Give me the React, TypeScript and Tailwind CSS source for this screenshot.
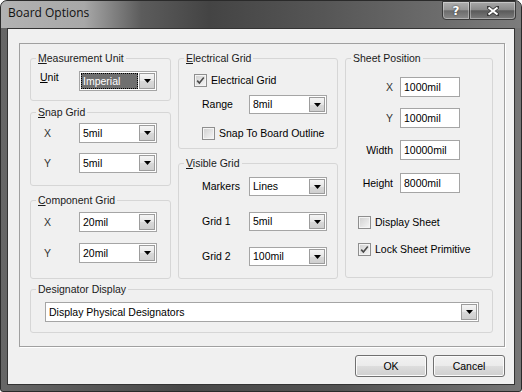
import React from "react";

const Arrow = () => (
  <svg width="7" height="4" viewBox="0 0 7 4">
    <path d="M0 0H7L3.5 4Z" fill="#000" />
  </svg>
);

function Combo({
  value,
  className,
  selected,
}: {
  value: string;
  className: string;
  selected?: boolean;
}) {
  return (
    <div
      className={
        "flex items-stretch bg-white border border-[#a5a5a5] p-[1px] shrink-0 " +
        className
      }
    >
      <div className="flex-1 flex items-center min-w-0 pr-[1px]">
        {selected ? (
          <span className="flex-1 h-full flex items-center bg-[#6f6f6f] text-white outline outline-1 outline-dotted outline-black -outline-offset-1 pl-[2px]">
            {value}
          </span>
        ) : (
          <span className="pl-[2px] whitespace-nowrap">{value}</span>
        )}
      </div>
      <div className="w-[16px] flex items-center justify-center border border-[#9c9c9c] bg-[linear-gradient(#f5f5f5,#e6e6e6_50%,#d9d9d9_51%,#cfcfcf)]">
        <Arrow />
      </div>
    </div>
  );
}

function Check({ checked }: { checked?: boolean }) {
  return (
    <div className="w-[13px] h-[13px] border border-[#8e8e8e] bg-[#f4f4f4] p-[1px] shrink-0">
      <div className="w-full h-full flex items-center justify-center bg-[linear-gradient(135deg,#d2d2d2,#f3f3f3)]">
        {checked && (
          <svg width="9" height="9" viewBox="0 0 9 9">
            <path
              d="M1.2 4.6L3.4 7L7.8 1.6"
              stroke="#4a4a4a"
              strokeWidth="1.6"
              fill="none"
            />
          </svg>
        )}
      </div>
    </div>
  );
}

function Field({ value }: { value: string }) {
  return (
    <div className="w-[60px] h-[20px] bg-white border border-[#a5a5a5] flex items-center pl-[3px] whitespace-nowrap">
      {value}
    </div>
  );
}

function Legend({ children }: { children: React.ReactNode }) {
  return (
    <legend className="ml-[5px] px-[2px] leading-[13px] text-[#1a1a1a] whitespace-nowrap">
      {children}
    </legend>
  );
}

const gb = "border border-[#d6d6d6] rounded-[3px] m-0 p-0 min-w-0";

function CaptionButtons() {
  return (
    <div className="flex mr-[5px]">
      <div className="w-[28px] h-[19px] border border-[#3a3a3a] rounded-bl-[4px] bg-[linear-gradient(#b0b0b0,#979797_45%,#6c6c6c_52%,#8a8a8a)] shadow-[inset_0_0_0_1px_rgba(255,255,255,0.35)] flex items-center justify-center">
        <span className="font-['DejaVu_Sans',sans-serif] font-bold text-[12px] leading-[12px] text-white [text-shadow:0_0_2px_#222]">
          ?
        </span>
      </div>
      <div className="w-[46px] h-[19px] border border-l-0 border-[#3a3a3a] rounded-br-[4px] bg-[linear-gradient(#a8a8a8,#8a8a8a_45%,#5a5a5a_52%,#7c7c7c)] shadow-[inset_0_0_0_1px_rgba(255,255,255,0.35)] flex items-center justify-center">
        <svg width="12" height="10" viewBox="0 0 12 10">
          <path
            d="M1 1L11 9M11 1L1 9"
            stroke="#3a3a3a"
            strokeWidth="3.6"
            strokeLinecap="square"
          />
          <path
            d="M1.5 1.5L10.5 8.5M10.5 1.5L1.5 8.5"
            stroke="#fff"
            strokeWidth="2"
          />
        </svg>
      </div>
    </div>
  );
}

function Btn({ label }: { label: string }) {
  return (
    <div className="w-[72px] h-[22px] rounded-[3px] border border-[#707070] bg-[linear-gradient(#f2f2f2,#ebebeb_50%,#dddddd_51%,#cfcfcf)] shadow-[inset_0_0_0_1px_#fbfbfb] flex items-center justify-center">
      {label}
    </div>
  );
}

export default function App() {
  return (
    <div className="w-[522px] h-[392px] bg-white font-['Liberation_Sans',Arial,sans-serif] text-[10.5px] leading-[13px] text-black">
      <div className="w-full h-full rounded-t-[7px] rounded-b-[3px] flex flex-col overflow-hidden border border-[#2a2a2a] bg-[linear-gradient(90deg,#666,#484848_35%,#525252_65%,#767676)]">
        {/* title bar */}
        <div className="h-[27px] flex items-start justify-between bg-[linear-gradient(90deg,#b2b2b2,#a8a8a8_16%,#5c5c5c_27%,#444_40%,#565656_62%,#6c6c6c_84%,#7c7c7c)]">
          <span className="mt-[4px] ml-[7px] font-['Open_Sans',sans-serif] text-[12px] leading-[16px] text-[#111]">
            Board Options
          </span>
          <CaptionButtons />
        </div>

        {/* client */}
        <div className="flex-1 mx-[6px] mb-[6px] border border-[#333] bg-[#f0f0f0] flex flex-col pl-[11px] pt-[14px]">
          {/* panel */}
          <div className="w-[486px] h-[304px] border border-[#a0a0a0] shadow-[1px_1px_0_#fff] pt-[8px] pl-[10px] pr-[11px] flex flex-col">
            <div className="flex gap-[7px]">
              {/* left column */}
              <div className="w-[141px] flex flex-col">
                <fieldset className={gb + " h-[49px]"}>
                  <Legend>
                    <u>M</u>easurement Unit
                  </Legend>
                  <div className="flex items-start mt-[6px]">
                    <span className="ml-[9px] w-[39px]">
                      <u>U</u>nit
                    </span>
                    <Combo value="Imperial" selected className="w-[78px] h-[20px]" />
                  </div>
                </fieldset>
                <fieldset className={gb + " h-[80px] mt-[5px]"}>
                  <Legend>
                    <u>S</u>nap Grid
                  </Legend>
                  <div className="flex items-center mt-[4px]">
                    <span className="ml-[13px] w-[35px] text-[#333]">X</span>
                    <Combo value="5mil" className="w-[78px] h-[20px]" />
                  </div>
                  <div className="flex items-center mt-[10px]">
                    <span className="ml-[13px] w-[35px] text-[#333]">Y</span>
                    <Combo value="5mil" className="w-[78px] h-[20px]" />
                  </div>
                </fieldset>
                <fieldset className={gb + " h-[85px] mt-[8px]"}>
                  <Legend>
                    <u>C</u>omponent Grid
                  </Legend>
                  <div className="flex items-center mt-[5px]">
                    <span className="ml-[13px] w-[35px] text-[#333]">X</span>
                    <Combo value="20mil" className="w-[78px] h-[20px]" />
                  </div>
                  <div className="flex items-center mt-[11px]">
                    <span className="ml-[13px] w-[35px] text-[#333]">Y</span>
                    <Combo value="20mil" className="w-[78px] h-[20px]" />
                  </div>
                </fieldset>
              </div>

              {/* middle column */}
              <div className="w-[160px] flex flex-col">
                <fieldset className={gb + " h-[97px]"}>
                  <Legend>
                    <u>E</u>lectrical Grid
                  </Legend>
                  <div className="flex items-center mt-[9px] ml-[15px]">
                    <Check checked />
                    <span className="ml-[4px]">Electrical Grid</span>
                  </div>
                  <div className="flex items-center mt-[8px]">
                    <span className="ml-[23px] w-[47px]">Range</span>
                    <Combo value="8mil" className="w-[78px] h-[19px]" />
                  </div>
                  <div className="flex items-center mt-[13px] ml-[23px]">
                    <Check />
                    <span className="ml-[4px]">Snap To Board Outline</span>
                  </div>
                </fieldset>
                <fieldset className={gb + " h-[122px] mt-[8px]"}>
                  <Legend>
                    <u>V</u>isible Grid
                  </Legend>
                  <div className="flex items-center mt-[7px]">
                    <span className="ml-[23px] w-[47px]">Markers</span>
                    <Combo value="Lines" className="w-[78px] h-[19px]" />
                  </div>
                  <div className="flex items-center mt-[16px]">
                    <span className="ml-[23px] w-[47px]">Grid 1</span>
                    <Combo value="5mil" className="w-[78px] h-[19px]" />
                  </div>
                  <div className="flex items-center mt-[16px]">
                    <span className="ml-[23px] w-[47px]">Grid 2</span>
                    <Combo value="100mil" className="w-[78px] h-[19px]" />
                  </div>
                </fieldset>
              </div>

              {/* right column */}
              <div className="w-[148px] flex flex-col">
                <fieldset className={gb + " h-[226px]"}>
                  <Legend>Sheet Position</Legend>
                  <div className="flex items-center mt-[12px]">
                    <span className="w-[47px] text-right text-[#333]">X</span>
                    <span className="ml-[7px]">
                      <Field value="1000mil" />
                    </span>
                  </div>
                  <div className="flex items-center mt-[11px]">
                    <span className="w-[47px] text-right text-[#333]">Y</span>
                    <span className="ml-[7px]">
                      <Field value="1000mil" />
                    </span>
                  </div>
                  <div className="flex items-center mt-[12px]">
                    <span className="w-[47px] text-right">Width</span>
                    <span className="ml-[7px]">
                      <Field value="10000mil" />
                    </span>
                  </div>
                  <div className="flex items-center mt-[13px]">
                    <span className="w-[47px] text-right">Height</span>
                    <span className="ml-[7px]">
                      <Field value="8000mil" />
                    </span>
                  </div>
                  <div className="flex items-center mt-[23px] ml-[12px]">
                    <Check />
                    <span className="ml-[4px]">Display Sheet</span>
                  </div>
                  <div className="flex items-center mt-[14px] ml-[12px]">
                    <Check checked />
                    <span className="ml-[4px]">Lock Sheet Primitive</span>
                  </div>
                </fieldset>
              </div>
            </div>

            {/* designator display */}
            <fieldset className={gb + " h-[50px] mt-[4px]"}>
              <Legend>Designator Display</Legend>
              <div className="flex mt-[6px] ml-[14px]">
                <Combo
                  value="Display Physical Designators"
                  className="w-[434px] h-[20px]"
                />
              </div>
            </fieldset>
          </div>

          {/* buttons */}
          <div className="w-[486px] flex justify-end gap-[6px] mt-[8px]">
            <Btn label="OK" />
            <Btn label="Cancel" />
          </div>
        </div>
      </div>
    </div>
  );
}
